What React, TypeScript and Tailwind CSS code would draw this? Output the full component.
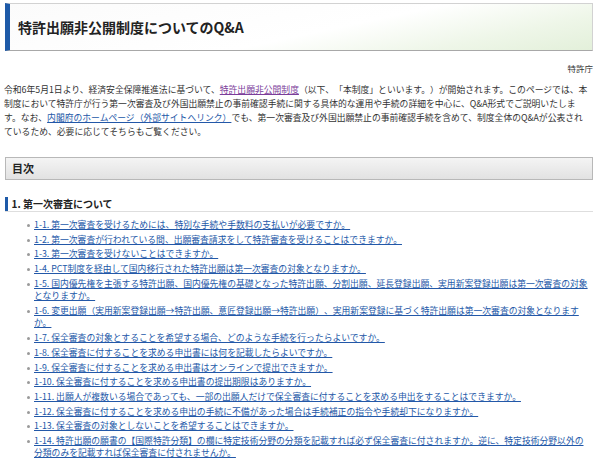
const items = [
  "1-1. 第一次審査を受けるためには、特別な手続や手数料の支払いが必要ですか。",
  "1-2. 第一次審査が行われている間、出願審査請求をして特許審査を受けることはできますか。",
  "1-3. 第一次審査を受けないことはできますか。",
  "1-4. PCT制度を経由して国内移行された特許出願は第一次審査の対象となりますか。",
  "1-5. 国内優先権を主張する特許出願、国内優先権の基礎となった特許出願、分割出願、延長登録出願、実用新案登録出願は第一次審査の対象となりますか。",
  "1-6. 変更出願（実用新案登録出願→特許出願、意匠登録出願→特許出願）、実用新案登録に基づく特許出願は第一次審査の対象となりますか。",
  "1-7. 保全審査の対象とすることを希望する場合、どのような手続を行ったらよいですか。",
  "1-8. 保全審査に付することを求める申出書には何を記載したらよいですか。",
  "1-9. 保全審査に付することを求める申出書はオンラインで提出できますか。",
  "1-10. 保全審査に付することを求める申出書の提出期限はありますか。",
  "1-11. 出願人が複数いる場合であっても、一部の出願人だけで保全審査に付することを求める申出をすることはできますか。",
  "1-12. 保全審査に付することを求める申出の手続に不備があった場合は手続補正の指令や手続却下になりますか。",
  "1-13. 保全審査の対象としないことを希望することはできますか。",
  "1-14. 特許出願の願書の【国際特許分類】の欄に特定技術分野の分類を記載すれば必ず保全審査に付されますか。逆に、特定技術分野以外の分類のみを記載すれば保全審査に付されませんか。",
];

export default function App() {
  return (
    <div className="h-[460px] overflow-hidden bg-white pl-[4px] pr-[7px] pt-[3px] text-[#333] font-['Noto_Sans_CJK_JP',sans-serif] [text-spacing-trim:space-all]">
      {/* title */}
      <div className="ml-[1px] flex h-[48px] items-center border border-[#d2d2d2] border-b-[#a8a8a8] border-l-[5px] border-l-[#1e5aa8] bg-[linear-gradient(168deg,#fbfbfb_0%,#ffffff_55%,#eef6e8_80%,#e3f0da_100%)] pl-[8px]">
        <h1 className="text-[14px] font-bold leading-none text-[#222]">
          特許出願非公開制度についてのQ&amp;A
        </h1>
      </div>

      <p className="mt-[11px] text-right text-[8.5px] leading-[12px]">特許庁</p>

      <p className="mt-[9px] mr-[5px] text-[8.8px] leading-[14px]">
        令和6年5月1日より、経済安全保障推進法に基づいて、
        <a href="#" className="text-[#7b3d9a] underline">特許出願非公開制度</a>
        （以下、「本制度」といいます。）が開始されます。このページでは、本制度において特許庁が行う第一次審査及び外国出願禁止の事前確認手続に関する具体的な運用や手続の詳細を中心に、Q&amp;A形式でご説明いたします。なお、
        <a href="#" className="text-[#2358a8] underline">内閣府のホームページ（外部サイトへリンク）</a>
        でも、第一次審査及び外国出願禁止の事前確認手続を含めて、制度全体のQ&amp;Aが公表されているため、必要に応じてそちらもご覧ください。
      </p>

      {/* toc */}
      <div className="ml-[1px] mt-[18px] flex h-[23px] items-center border border-[#b8b8b8] bg-[linear-gradient(180deg,#f4f4f4,#e2e2e2)] pl-[6px]">
        <h2 className="text-[11px] font-bold leading-none text-[#222]">目次</h2>
      </div>

      <div className="ml-[1px] mt-[16px] flex h-[16px] items-center border-b border-[#dedede]">
        <span className="h-[14px] w-[2.5px] bg-[#1e5aa8]" />
        <h3 className="ml-[4px] text-[10px] font-bold leading-none text-[#222]">1. 第一次審査について</h3>
      </div>

      <ul className="mt-[7px] mr-[2px] pl-[30px] text-[8.8px] leading-[12.5px]">
        {items.map((t) => (
          <li key={t} className="relative mb-[2.2px]">
            <span className="absolute left-[-7px] top-[5px] h-[3px] w-[3px] rounded-full bg-[#9a9a9a]" />
            <a href="#" className="text-[#2358a8] underline">{t}</a>
          </li>
        ))}
      </ul>
    </div>
  );
}
